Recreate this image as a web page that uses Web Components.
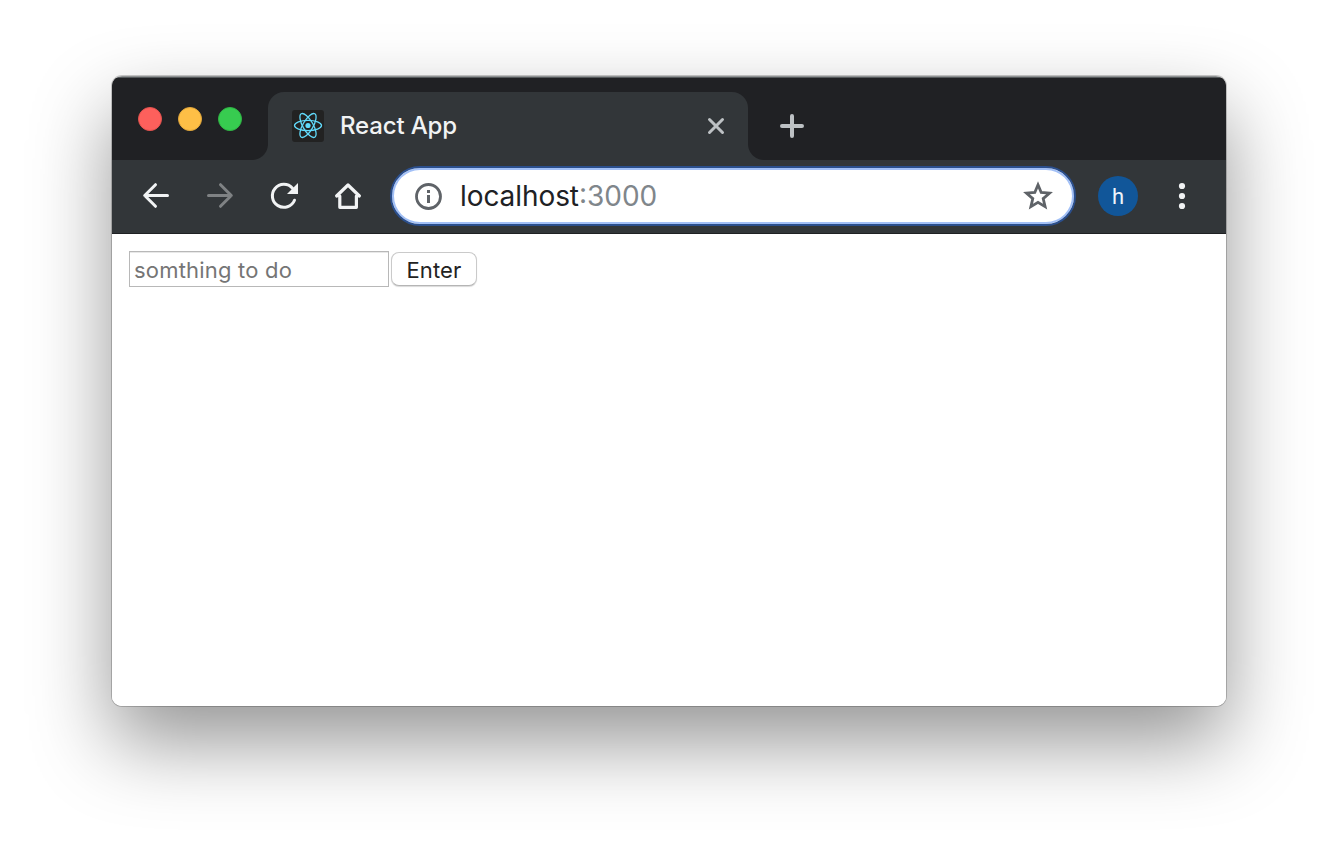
<!DOCTYPE html>
<html lang="en">
<head>
<meta charset="utf-8">
<title>React App</title>
<style>
html,body{margin:0;height:100%;background:#fff;overflow:hidden}
body{display:flex;justify-content:center;padding-top:76px;box-sizing:border-box;font-family:Inter,"Liberation Sans",sans-serif}
</style>
</head>
<body>
<browser-window>
  <tab-strip slot="tabs"><browser-tab>React App</browser-tab></tab-strip>
  <tool-bar slot="toolbar">
    <omni-box><span>localhost</span><span slot="port">:3000</span></omni-box>
    <user-avatar>h</user-avatar>
  </tool-bar>
  <todo-form placeholder="somthing to do">Enter</todo-form>
</browser-window>
<script>
const define = (name, html) => customElements.define(name, class extends HTMLElement {
  constructor() {
    super();
    const t = document.createElement('template');
    t.innerHTML = html;
    this.attachShadow({mode: 'open'}).append(t.content.cloneNode(true));
    const input = this.shadowRoot.querySelector('input');
    if (input) input.placeholder = this.getAttribute('placeholder') || '';
  }
});

define('browser-window', `<style>
:host{display:flex;flex-direction:column;width:1114px;height:630px;border-radius:10px;
 box-shadow:0 0 0 1px rgba(0,0,0,.2),0 36px 80px rgba(0,0,0,.42)}
.frame{flex:1;display:flex;flex-direction:column;overflow:hidden;border-radius:10px;background:linear-gradient(#8f9293 0 1px,#565a5c 1px 2px,#202124 2px 82px,#fff 82px);padding-top:2px;box-sizing:border-box}
main{flex:1;background:#fff;padding:17px}
</style><div class="frame"><slot name="tabs"></slot><slot name="toolbar"></slot><main><slot></slot></main></div>`);

define('traffic-lights', `<style>
:host{display:flex;gap:16px;padding:29px 26px 0;height:24px}
i{width:24px;height:24px;border-radius:50%;box-sizing:border-box}
.r{background:#fd605c;border:1px solid #e4524e}.y{background:#febf46;border:1px solid #e2a73b}.g{background:#37cc50;border:1px solid #2fb544}
</style><i class="r"></i><i class="y"></i><i class="g"></i>`);

define('tab-strip', `<style>
:host{display:flex;height:82px;background:#202124;flex:none}
svg{display:block;margin:36px 0 0 32px}
</style><traffic-lights></traffic-lights><slot></slot>
<svg width="24" height="24" viewBox="0 0 24 24" fill="none" stroke="#bdc1c4" stroke-width="4" stroke-linecap="round"><path d="M12 2v20M2 12h20"/></svg>`);

define('react-logo', `<style>:host{display:block;width:32px;height:32px}svg{display:block}</style>
<svg width="32" height="32" viewBox="0 0 32 32"><rect width="32" height="32" rx="3" fill="#222"/>
<g fill="none" stroke="#61dafb" stroke-width="1.300"><ellipse cx="16" cy="15.500" rx="13.500" ry="5.100"/><ellipse cx="16" cy="15.500" rx="13.500" ry="5.100" transform="rotate(60 16 15.500)"/><ellipse cx="16" cy="15.500" rx="13.500" ry="5.100" transform="rotate(120 16 15.500)"/></g><circle cx="16" cy="15.500" r="2.600" fill="#61dafb"/></svg>`);

define('browser-tab', `<style>
:host{display:flex;align-items:center;width:480px;height:68px;margin-top:14px;box-sizing:border-box;padding:0 22px 0 24px;background:#323639;border-radius:16px 16px 0 0;position:relative;color:#f1f3f4;font-size:24px;font-weight:500}
:host::before,:host::after{content:"";position:absolute;bottom:0;width:16px;height:16px}
:host::before{left:-16px;background:radial-gradient(circle at 0 0,transparent 15.5px,#323639 16.5px)}
:host::after{right:-16px;background:radial-gradient(circle at 100% 0,transparent 15.5px,#323639 16.5px)}
.t{flex:1;padding-left:16px;letter-spacing:-.15px;line-height:30px}
</style><react-logo></react-logo><span class="t"><slot></slot></span>
<svg width="20" height="20" viewBox="0 0 20 20" stroke="#bdc1c4" stroke-width="3" stroke-linecap="round"><path d="M3.500 3.500l13 13M16.500 3.500l-13 13"/></svg>`);

define('tool-bar', `<style>
:host{display:flex;align-items:center;height:74px;background:#323639;box-shadow:inset 0 -1px #1f2123;padding-bottom:2px;box-sizing:border-box;flex:none;color:#f1f3f4}
.nav{display:flex;gap:32px;padding:0 26px 0 28px}
svg{display:block}
.more{margin-left:28px}
</style>
<div class="nav">
<svg width="32" height="32" viewBox="0 0 32 32" fill="none" stroke="#f1f3f4" stroke-width="3" stroke-linecap="round" stroke-linejoin="round"><path d="M27.500 15.500H5M15.500 4.700L4.700 15.500l10.800 10.800"/></svg>
<svg width="32" height="32" viewBox="0 0 32 32" fill="none" stroke="#7f8284" stroke-width="3" stroke-linecap="round" stroke-linejoin="round"><path d="M4.500 15.500H27M16.500 4.700l10.800 10.800-10.800 10.800"/></svg>
<svg width="32" height="32" viewBox="0 0 32 32" fill="none" stroke="#f1f3f4" stroke-width="3" stroke-linecap="round"><path d="M26.500 20.200A11.500 11.500 0 1 1 24.500 8.200"/><path d="M30 3v11H19z" fill="#f1f3f4" stroke="none"/></svg>
<svg width="32" height="32" viewBox="0 0 32 32" fill="none" stroke="#f1f3f4" stroke-width="3.200" stroke-linecap="round" stroke-linejoin="round"><path d="M7.800 16v11.300h16.600V16M4.600 16L16 5 27.400 16"/></svg>
</div><slot></slot>
<svg class="more" width="32" height="32" viewBox="0 0 32 32" fill="#f1f3f4"><circle cx="16" cy="6" r="3.100"/><circle cx="16" cy="16" r="3.100"/><circle cx="16" cy="26" r="3.100"/></svg>`);

define('omni-box', `<style>
:host{display:flex;align-items:center;width:686px;height:60px;box-sizing:border-box;border:2px solid #2b4f8d;border-radius:30px;background:#fff;box-shadow:inset 0 0 0 2px #a2c0f7;color:#202124;font-size:28px;padding:0 20px}
.u{flex:1;padding-left:16px;white-space:nowrap;line-height:36px}
.h{letter-spacing:-.08px}.p{color:#80868b;letter-spacing:0}
svg{display:block}
</style><svg width="32" height="32" viewBox="0 0 32 32"><circle cx="16.500" cy="16.500" r="12" fill="none" stroke="#5f6368" stroke-width="2.800"/><path d="M15 10h3v3h-3zM15 15h3v8h-3z" fill="#5f6368"/></svg>
<span class="u"><span class="h"><slot></slot></span><span class="p"><slot name="port"></slot></span></span>
<svg width="32" height="32" viewBox="0 0 32 32" fill="none" stroke="#5f6368" stroke-width="2.800"><path d="M16 4.800l3.200 7.700 8.300.7-6.300 5.400 1.900 8.100-7.100-4.300-7.100 4.300 1.900-8.100-6.300-5.400 8.300-.7z"/></svg>`);

define('user-avatar', `<style>
:host{display:flex;align-items:center;justify-content:center;width:40px;height:40px;margin-left:22px;border-radius:50%;background:#115699;color:#eef4fa;font:22px Roboto,"Liberation Sans",sans-serif}
</style><slot></slot>`);

define('todo-form', `<style>
:host{display:flex;align-items:flex-start;gap:2px;color:#222}
input{width:260px;height:36px;box-sizing:border-box;border:1px solid #b8b8b8;box-shadow:inset 0 1px 0 #e8e8e8;border-radius:0;margin:0;padding:2px 4px 0;background:#fff;font:22px Inter,"Liberation Sans",sans-serif;outline:0;letter-spacing:.2px}
input::placeholder{color:#757575;opacity:1}
button{width:86px;height:34px;margin:1px 0 0;box-sizing:border-box;border:1px solid #cacaca;border-bottom-color:#b5b5b5;border-radius:8px;background:#fff;box-shadow:0 1px 1px rgba(0,0,0,.15);padding:2px 0 0;color:#222;font:22px Inter,"Liberation Sans",sans-serif;letter-spacing:.15px}
</style><input type="text"><button><slot></slot></button>`);
</script>
</body>
</html>
